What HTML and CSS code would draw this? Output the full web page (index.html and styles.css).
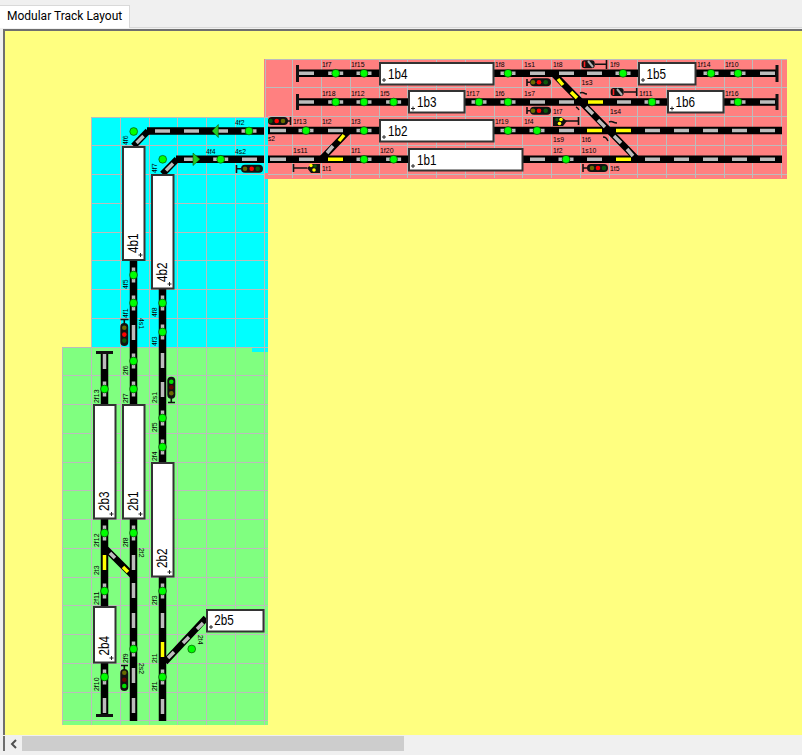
FILE: index.html
```html
<!DOCTYPE html>
<html lang="en">
<head>
<meta charset="utf-8">
<title>Modular Track Layout</title>
<link rel="stylesheet" href="styles.css">
</head>
<body>
<div class="window">
  <div class="tabstrip"><div class="tab">Modular Track Layout</div></div>
  <div class="frame">
    <div class="canvas">
      <svg class="layout" width="797" height="704" viewBox="5 31 797 704" xmlns="http://www.w3.org/2000/svg">
        <defs>
          <g id="dh"><path class="dash" d="M-7.500 0h4M3.500 0h4"/><circle class="lamp-det" r="3.900"/></g>
          <g id="dv"><path class="dash" d="M0 -7.500v4M0 3.500v4"/><circle class="lamp-det" r="3.900"/></g>
          <g id="plus"><path class="plus" d="M-2 0h4M0 -2v4"/></g>
        </defs>

        <!-- panels -->
        <rect class="p-red" x="264" y="59" width="523" height="120"/>
        <rect class="p-cyan" x="91" y="117" width="177" height="235"/>
        <rect class="p-red" x="264" y="173" width="4" height="6"/>
        <rect class="p-green" x="62" y="347" width="190" height="5"/>
        <rect class="p-green" x="62" y="352" width="206" height="373"/>

        <!-- grids -->
        <path class="grid" d="M292.75 59V178M321.5 59V178M350.25 59V178M379 59V178M407.75 59V178M436.5 59V178M465.25 59V178M494 59V178M522.75 59V178M551.5 59V178M580.25 59V178M609 59V178M637.75 59V178M666.5 59V178M695.25 59V178M724 59V178M752.75 59V178M781.5 59V178M265 59V117M265 59H787M265 87.75H787M268 116.5H787M268 145.25H787M268 174H787"/>
        <path class="grid" d="M91.5 117V347M120.25 117V347M149 117V347M177.75 117V347M206.5 117V347M235.25 117V347M264 117V347M91 117H268M91 145.75H268M91 174.5H264M91 203.25H268M91 232H268M91 260.75H268M91 289.5H268M91 318.25H268"/>
        <path class="grid" d="M62.75 347V725M91.5 347V725M120.25 347V725M149 347V725M177.75 347V725M206.5 347V725M235.25 347V725M264 347V725M62 347H268M62 375.75H268M62 404.5H268M62 433.25H268M62 462H268M62 490.75H268M62 519.5H268M62 548.25H268M62 577H268M62 605.75H268M62 634.5H268M62 663.25H268M62 692H268M62 720.75H268"/>

        <!-- track bodies -->
        <path class="rail" d="M297 73.3H379M494 73.3H638M696 73.3H777M297 102H408M465 102H667M724 102H777M268 130.6H379M494 130.6H782M268 159.3H408M523 159.3H782"/>
        <path class="rail-d" d="M553 73.3L637 159.3M322 158.5L348 131.6"/>
        <path class="rail-d" d="M133.5 146L148 131"/>
        <path class="rail-d" d="M162.5 174L177 159.3"/>
        <path class="rail" d="M147 131H264M176 159.3H264"/>
        <path class="rail" d="M133.5 260V404M162.5 289V462M104.5 352V404M133.5 519V721M162.5 577V721M104.5 519V606M104.5 663V715"/>
        <path class="rail-d" d="M106 549L133 576M165 662L206 618"/>

        <!-- buffers -->
        <path class="stop" d="M297.5 65V82M297.5 94V110M777 65V82M777 94V110M96 352.5H113M96 715.5H113"/>

        <!-- dashes -->
        <path class="dash" d="M299 73.3h15M530 73.3h15M559 73.3h15M587 73.3h15M760 73.3h15M299 102h15M530 102h15M559 102h15M617 102h14M760 102h15M270 130.6h16M328 130.6h15M559 130.6h15M645 130.6h15M674 130.6h15M703 130.6h15M732 130.6h15M760 130.6h15M270 159.3h16M299 159.3h15M530 159.3h15M587 159.3h15M645 159.3h15M674 159.3h15M703 159.3h15M732 159.3h15M760 159.3h15"/>
        <path class="dash" d="M155 131h15M184 131h15M218 131h10M184 159.3h9M242 159.3h15M136.500 143l7 -7M166 170.500l7 -7"/>
        <path class="dash" d="M133.500 325v15M162.500 353v15M162.500 382v15M104.500 354v15M133.500 555v15M133.500 583v15M133.500 613v15M133.500 668v15M133.500 698v15M162.500 613v15M162.500 699v15M104.500 698v15"/>
        <path class="dash" d="M586 107l7 7M598 120l7 7M614 136l7 7M627 149l6 7M327 153l6 -7M110 553l5 5M168 658l6 -6M183 643l6 -6M197 629l6 -6"/>
        <path class="dash-y" d="M588 102h15M587 130.6h15M616 130.6h15M328 159.3h15M616 159.3h15M104.500 555v15M162.500 642v15M558 79l5 6M571 92l6 6M123 567l5 5M339 141l5 -6"/>

        <!-- detectors -->
        <use href="#dh" x="335.700" y="73.300"/><use href="#dh" x="364" y="73.300"/><use href="#dh" x="508" y="73.300"/><use href="#dh" x="623" y="73.300"/><use href="#dh" x="711" y="73.300"/><use href="#dh" x="738" y="73.300"/>
        <use href="#dh" x="335.700" y="102"/><use href="#dh" x="364" y="102"/><use href="#dh" x="393.600" y="102"/><use href="#dh" x="479" y="102"/><use href="#dh" x="508" y="102"/><use href="#dh" x="652" y="102"/><use href="#dh" x="738" y="102"/>
        <use href="#dh" x="306" y="130.600"/><use href="#dh" x="364" y="130.600"/><use href="#dh" x="508" y="130.600"/><use href="#dh" x="537" y="130.600"/>
        <use href="#dh" x="364" y="159.300"/><use href="#dh" x="393.600" y="159.300"/><use href="#dh" x="566" y="159.300"/>
        <use href="#dh" x="249" y="131"/><use href="#dh" x="220.700" y="159.300"/>
        <use href="#dv" x="133.500" y="275"/><use href="#dv" x="133.500" y="303"/><use href="#dv" x="133.500" y="361"/><use href="#dv" x="133.500" y="389"/><use href="#dv" x="133.500" y="533"/><use href="#dv" x="133.500" y="649"/>
        <use href="#dv" x="162.500" y="303"/><use href="#dv" x="162.500" y="332"/><use href="#dv" x="162.500" y="418"/><use href="#dv" x="162.500" y="447"/><use href="#dv" x="162.500" y="591"/><use href="#dv" x="162.500" y="677"/>
        <use href="#dv" x="104.500" y="389"/><use href="#dv" x="104.500" y="533"/><use href="#dv" x="104.500" y="591"/><use href="#dv" x="104.500" y="677"/>
        <circle class="lamp-det" cx="133.700" cy="131.500" r="3.900"/>
        <circle class="lamp-det" cx="162.700" cy="159.300" r="3.900"/>
        <circle class="lamp-det" cx="191.700" cy="649" r="3.900"/>

        <!-- direction arrows -->
        <path class="arrow" d="M212 131L218.300 124.500V137.500Z"/>
        <path class="arrow" d="M200 159.300L193 153V165.500Z"/>

        <!-- switch marks -->
        <path class="mark" d="M580 93q2 -1 4 0q1 1 3 1M576 107q2 1 3 3M609 122q2 -1 4 0q2 1 4 1M603 137q2 0 3 1q1 1 2 3"/>

        <!-- signals -->
        <g class="sig">
          <path class="post" d="M527 82.300h5M527 79v7"/><rect class="head" x="530" y="78.300" width="21" height="8" rx="4"/><circle class="l-o" cx="533" cy="82.300" r="2.300"/><circle class="l-r" cx="539" cy="82.300" r="2.300"/><circle class="l-g" cx="545.700" cy="82.300" r="2.300"/>
          <path class="post" d="M527 110.700h5M527 107v7"/><rect class="head" x="530" y="106.700" width="21" height="8" rx="4"/><circle class="l-o" cx="533" cy="110.700" r="2.300"/><circle class="l-r" cx="539" cy="110.700" r="2.300"/><circle class="l-g" cx="545.700" cy="110.700" r="2.300"/>
          <path class="post" d="M583 168h5M583 164v8"/><rect class="head" x="587" y="164" width="21" height="8" rx="4"/><circle class="l-o" cx="592" cy="168" r="2.300"/><circle class="l-r" cx="598" cy="168" r="2.300"/><circle class="l-g" cx="604" cy="168" r="2.300"/>
          <path class="post" d="M236.500 168.700h5M236.500 165v8"/><rect class="head" x="241" y="164.700" width="22" height="8" rx="4"/><circle class="l-o" cx="245" cy="168.700" r="2.300"/><circle class="l-r" cx="251.700" cy="168.700" r="2.300"/><circle class="l-g" cx="257.700" cy="168.700" r="2.300"/>
          <path class="post" d="M285 121h5M290.500 117v8"/><rect class="head" x="268" y="117" width="20" height="8" rx="4"/><circle class="l-g" cx="270.500" cy="121" r="2.300"/><circle class="l-r" cx="276.700" cy="121" r="2.300"/><circle class="l-o" cx="283" cy="121" r="2.300"/>

          <path class="post" d="M595 64.300h11M606.500 60v9"/><rect class="head" x="581.700" y="60.300" width="13" height="8" rx="3"/><path class="l-bar" d="M584.500 61.500v5.500"/><path class="l-diag" d="M588 61l5 6"/>
          <path class="post" d="M624 92h12M636.700 88v8"/><rect class="head" x="610.700" y="88" width="13" height="8" rx="3"/><path class="l-bar" d="M613.500 89v6"/><path class="l-diag" d="M617 89l5 6"/>

          <path class="post" d="M566 121h12M578.500 117v8"/><path class="head" d="M553 117h8l6 4l-4 5h-10z"/><circle class="l-g" cx="557" cy="119.500" r="1.800"/><circle class="l-y" cx="561" cy="119.500" r="1.800"/><circle class="l-y" cx="559.500" cy="123.500" r="1.800"/>
          <path class="post" d="M294 168h13M293.500 164v8"/><path class="head" d="M320 164h-8l-5 4l4 5h9z"/><circle class="l-y" cx="311" cy="165.500" r="1.700"/><circle class="l-g" cx="315" cy="166" r="1.800"/><circle class="l-y" cx="314" cy="170" r="1.800"/>

          <path class="post" d="M124.300 319.500v5M120.500 319.500h8"/><rect class="head" x="120.300" y="323" width="8" height="23" rx="4"/><circle class="l-o" cx="124.300" cy="327.700" r="2.300"/><circle class="l-r" cx="124.300" cy="334.600" r="2.300"/><circle class="l-g" cx="124.300" cy="340.600" r="2.300"/>
          <path class="post" d="M171.300 398v5M168 402.500h7"/><rect class="head" x="167.300" y="376.700" width="8" height="22" rx="4"/><circle class="l-G" cx="171.300" cy="381.700" r="2.300"/><circle class="l-R" cx="171.300" cy="387.300" r="2.300"/><circle class="l-o" cx="171.300" cy="393.300" r="2.300"/>
          <path class="post" d="M124.300 665v5M121 665.500h7"/><rect class="head" x="120.300" y="669" width="8" height="22" rx="4"/><circle class="l-o" cx="124.300" cy="672.700" r="2.300"/><circle class="l-R" cx="124.300" cy="679.700" r="2.300"/><circle class="l-G" cx="124.300" cy="686" r="2.300"/>
        </g>

        <!-- blocks -->
        <rect class="block" x="380" y="63" width="113.500" height="21.500"/>
        <rect class="block" x="409" y="91" width="55.500" height="21.500"/>
        <rect class="block" x="380" y="120" width="113.500" height="21.500"/>
        <rect class="block" x="409" y="149" width="113.500" height="21.500"/>
        <rect class="block" x="639" y="63" width="56.500" height="21.500"/>
        <rect class="block" x="668" y="91" width="55.500" height="21.500"/>
        <rect class="block" x="123" y="147" width="21.500" height="113"/>
        <rect class="block" x="152" y="175" width="21.500" height="113.500"/>
        <rect class="block" x="94" y="405" width="21.500" height="113.500"/>
        <rect class="block" x="123" y="405" width="21.500" height="113.500"/>
        <rect class="block" x="152" y="463" width="21.500" height="113.500"/>
        <rect class="block" x="94" y="607" width="21.500" height="55.500"/>
        <rect class="block" x="207" y="610" width="56.500" height="21.500"/>

        <use href="#plus" x="384" y="80"/><use href="#plus" x="413" y="108.500"/><use href="#plus" x="384" y="137"/><use href="#plus" x="413" y="166"/><use href="#plus" x="643" y="80"/><use href="#plus" x="672" y="108.500"/>
        <use href="#plus" x="140.500" y="255"/><use href="#plus" x="169.500" y="284"/><use href="#plus" x="111.500" y="514"/><use href="#plus" x="140.500" y="514"/><use href="#plus" x="169.500" y="572"/><use href="#plus" x="111.500" y="658"/><use href="#plus" x="211" y="627"/>

        <!-- block labels -->
        <text class="blk" textLength="19.500" lengthAdjust="spacingAndGlyphs" x="388" y="79">1b4</text>
        <text class="blk" textLength="19.500" lengthAdjust="spacingAndGlyphs" x="417" y="107">1b3</text>
        <text class="blk" textLength="19.500" lengthAdjust="spacingAndGlyphs" x="388" y="136">1b2</text>
        <text class="blk" textLength="19.500" lengthAdjust="spacingAndGlyphs" x="417" y="164.500">1b1</text>
        <text class="blk" textLength="19.500" lengthAdjust="spacingAndGlyphs" x="646.500" y="79">1b5</text>
        <text class="blk" textLength="19.500" lengthAdjust="spacingAndGlyphs" x="675.500" y="107">1b6</text>
        <text class="blk" textLength="19.500" lengthAdjust="spacingAndGlyphs" x="214.300" y="625">2b5</text>
        <text class="blk" textLength="19.500" lengthAdjust="spacingAndGlyphs" transform="translate(137.700,253) rotate(-90)">4b1</text>
        <text class="blk" textLength="19.500" lengthAdjust="spacingAndGlyphs" transform="translate(166.700,282) rotate(-90)">4b2</text>
        <text class="blk" textLength="19.500" lengthAdjust="spacingAndGlyphs" transform="translate(109,511) rotate(-90)">2b3</text>
        <text class="blk" textLength="19.500" lengthAdjust="spacingAndGlyphs" transform="translate(137.700,511) rotate(-90)">2b1</text>
        <text class="blk" textLength="19.500" lengthAdjust="spacingAndGlyphs" transform="translate(167,568) rotate(-90)">2b2</text>
        <text class="blk" textLength="19.500" lengthAdjust="spacingAndGlyphs" transform="translate(109,655.500) rotate(-90)">2b4</text>

        <!-- small labels -->
        <g class="lbl" lengthAdjust="spacingAndGlyphs">
          <text lengthAdjust="spacingAndGlyphs" textLength="9.500" x="322" y="67">1f7</text><text lengthAdjust="spacingAndGlyphs" textLength="13.500" x="351" y="67">1f15</text><text lengthAdjust="spacingAndGlyphs" textLength="9.500" x="495" y="67">1f8</text><text lengthAdjust="spacingAndGlyphs" textLength="11" x="524" y="67">1s1</text><text lengthAdjust="spacingAndGlyphs" textLength="9.500" x="553" y="67">1t8</text><text lengthAdjust="spacingAndGlyphs" textLength="9.500" x="610" y="67">1f9</text><text lengthAdjust="spacingAndGlyphs" textLength="13.500" x="697" y="67">1f14</text><text lengthAdjust="spacingAndGlyphs" textLength="13.500" x="725" y="67">1f10</text>
          <text lengthAdjust="spacingAndGlyphs" textLength="13.500" x="322" y="95.500">1f18</text><text lengthAdjust="spacingAndGlyphs" textLength="13.500" x="351" y="95.500">1f12</text><text lengthAdjust="spacingAndGlyphs" textLength="9.500" x="380" y="95.500">1f5</text><text lengthAdjust="spacingAndGlyphs" textLength="13.500" x="466" y="95.500">1f17</text><text lengthAdjust="spacingAndGlyphs" textLength="9.500" x="495" y="95.500">1f6</text><text lengthAdjust="spacingAndGlyphs" textLength="11" x="524" y="95.500">1s7</text><text lengthAdjust="spacingAndGlyphs" textLength="13.500" x="639" y="95.500">1f11</text><text lengthAdjust="spacingAndGlyphs" textLength="13.500" x="725" y="95.500">1f16</text>
          <text lengthAdjust="spacingAndGlyphs" textLength="13.500" x="293" y="124">1f13</text><text lengthAdjust="spacingAndGlyphs" textLength="9.500" x="322" y="124">1t2</text><text lengthAdjust="spacingAndGlyphs" textLength="9.500" x="351" y="124">1f3</text><text lengthAdjust="spacingAndGlyphs" textLength="13.500" x="495" y="124">1f19</text><text lengthAdjust="spacingAndGlyphs" textLength="9.500" x="524" y="124">1f4</text>
          <text lengthAdjust="spacingAndGlyphs" textLength="14.700" x="293" y="153">1s11</text><text lengthAdjust="spacingAndGlyphs" textLength="9.500" x="351" y="153">1f1</text><text lengthAdjust="spacingAndGlyphs" textLength="13.500" x="380" y="153">1f20</text><text lengthAdjust="spacingAndGlyphs" textLength="9.500" x="553" y="153">1f2</text><text lengthAdjust="spacingAndGlyphs" textLength="14.700" x="581.500" y="153">1s10</text>
          <text lengthAdjust="spacingAndGlyphs" textLength="11" x="581.500" y="85">1s3</text><text lengthAdjust="spacingAndGlyphs" textLength="9.500" x="553" y="113.500">1t7</text><text lengthAdjust="spacingAndGlyphs" textLength="11" x="610" y="113.500">1s4</text><text lengthAdjust="spacingAndGlyphs" textLength="11" x="553" y="142">1s9</text><text lengthAdjust="spacingAndGlyphs" textLength="9.500" x="581.500" y="142">1t6</text><text lengthAdjust="spacingAndGlyphs" textLength="7" x="268" y="141">s2</text><text lengthAdjust="spacingAndGlyphs" textLength="9.500" x="322" y="171">1t1</text><text lengthAdjust="spacingAndGlyphs" textLength="9.500" x="610" y="171">1t5</text>
          <text lengthAdjust="spacingAndGlyphs" textLength="9.500" x="235" y="125">4f2</text><text lengthAdjust="spacingAndGlyphs" textLength="9.500" x="206" y="153.500">4f4</text><text lengthAdjust="spacingAndGlyphs" textLength="11" x="235" y="153.500">4s2</text>
          <text lengthAdjust="spacingAndGlyphs" textLength="9.500" transform="translate(128,145) rotate(-90)">4f6</text>
          <text lengthAdjust="spacingAndGlyphs" textLength="9.500" transform="translate(157,173) rotate(-90)">4f7</text>
          <text lengthAdjust="spacingAndGlyphs" textLength="9.500" transform="translate(128,289) rotate(-90)">4f5</text>
          <text lengthAdjust="spacingAndGlyphs" textLength="9.500" transform="translate(128,318) rotate(-90)">4f1</text>
          <text lengthAdjust="spacingAndGlyphs" textLength="9.500" transform="translate(157,317) rotate(-90)">4f8</text>
          <text lengthAdjust="spacingAndGlyphs" textLength="9.500" transform="translate(157,346) rotate(-90)">4f3</text>
          <text lengthAdjust="spacingAndGlyphs" textLength="11" transform="translate(139,318) rotate(90)">4s1</text>
          <text lengthAdjust="spacingAndGlyphs" textLength="9.500" transform="translate(128,375) rotate(-90)">2f6</text>
          <text lengthAdjust="spacingAndGlyphs" textLength="9.500" transform="translate(128,403) rotate(-90)">2f7</text>
          <text lengthAdjust="spacingAndGlyphs" textLength="13.500" transform="translate(99,403) rotate(-90)">2f13</text>
          <text lengthAdjust="spacingAndGlyphs" textLength="11" transform="translate(157,403) rotate(-90)">2s1</text>
          <text lengthAdjust="spacingAndGlyphs" textLength="9.500" transform="translate(157,432) rotate(-90)">2f5</text>
          <text lengthAdjust="spacingAndGlyphs" textLength="9.500" transform="translate(157,461) rotate(-90)">2f4</text>
          <text lengthAdjust="spacingAndGlyphs" textLength="13.500" transform="translate(99,547) rotate(-90)">2f12</text>
          <text lengthAdjust="spacingAndGlyphs" textLength="9.500" transform="translate(128,547) rotate(-90)">2f8</text>
          <text lengthAdjust="spacingAndGlyphs" textLength="9.500" transform="translate(99,575) rotate(-90)">2t3</text>
          <text lengthAdjust="spacingAndGlyphs" textLength="13.500" transform="translate(99,605) rotate(-90)">2f11</text>
          <text lengthAdjust="spacingAndGlyphs" textLength="9.500" transform="translate(157,605) rotate(-90)">2f3</text>
          <text lengthAdjust="spacingAndGlyphs" textLength="9.500" transform="translate(128,663) rotate(-90)">2f9</text>
          <text lengthAdjust="spacingAndGlyphs" textLength="9.500" transform="translate(157,663) rotate(-90)">2t1</text>
          <text lengthAdjust="spacingAndGlyphs" textLength="13.500" transform="translate(99,691) rotate(-90)">2f10</text>
          <text lengthAdjust="spacingAndGlyphs" textLength="9.500" transform="translate(157,691) rotate(-90)">2f1</text>
          <text lengthAdjust="spacingAndGlyphs" textLength="9.500" transform="translate(139,548) rotate(90)">2t2</text>
          <text lengthAdjust="spacingAndGlyphs" textLength="11" transform="translate(139,663) rotate(90)">2s2</text>
          <text lengthAdjust="spacingAndGlyphs" textLength="9.500" transform="translate(198,635) rotate(90)">2t4</text>
        </g>
      </svg>
    </div>
  </div>
  <div class="scrollbar">
    <div class="arrow-btn"><svg width="8" height="10" viewBox="0 0 8 10" xmlns="http://www.w3.org/2000/svg"><path class="chev" d="M6 1L2 5l4 4"/></svg></div>
    <div class="thumb"></div>
  </div>
</div>
</body>
</html>
```
FILE: styles.css
```css
html, body {
  margin: 0;
  padding: 0;
  background: #f0f0f0;
  overflow: hidden;
}
.window {
  width: 802px;
  height: 755px;
  display: flex;
  flex-direction: column;
}
.tabstrip {
  height: 28px;
  box-sizing: border-box;
  padding-top: 5px;
  border-bottom: 1px solid #d9d9d9;
  display: flex;
}
.tab {
  width: 130px;
  box-sizing: border-box;
  height: 23px;
  background: #fff;
  border: 1px solid #d9d9d9;
  border-bottom: none;
  border-left: none;
  padding-left: 7px;
  font: 12px/21px Roboto, sans-serif;
  color: #000;
}
.frame {
  margin: 1px 0 0 3px;
  border-left: 2px solid #6f6f6f;
  border-top: 2px solid #6f6f6f;
  height: 704px;
}
.canvas {
  background: #ffff80;
  height: 704px;
  width: 797px;
  overflow: hidden;
}
.layout { display: block; }

.p-red { fill: #ff8080; }
.p-cyan { fill: #00ffff; }
.p-green { fill: #80ff80; }
.grid { fill: none; stroke: #bcbcbc; stroke-width: 1; shape-rendering: crispEdges; }
.rail { fill: none; stroke: #000; stroke-width: 7.5; }
.rail-d { fill: none; stroke: #000; stroke-width: 6.5; }
.stop { fill: none; stroke: #111; stroke-width: 3; }
.dash { fill: none; stroke: #bcbcbc; stroke-width: 3.5; }
.dash-y { fill: none; stroke: #ffff00; stroke-width: 3.5; }
.lamp-det { fill: #00ff00; stroke: #063806; stroke-width: 0.6; }
.arrow { fill: #22cc22; stroke: #0a5a0a; stroke-width: 0.6; }
.mark { fill: none; stroke: #111; stroke-width: 1.4; }
.post { fill: none; stroke: #111; stroke-width: 1.6; }
.head { fill: #111; }
.l-o { fill: #6a6a00; }
.l-r { fill: #ff0000; }
.l-g { fill: #0a5a0a; }
.l-y { fill: #ffff00; }
.l-G { fill: #00e000; }
.l-R { fill: #660000; }
.l-bar { fill: none; stroke: #ff2020; stroke-width: 1.600; }
.l-diag { fill: none; stroke: #b0b0b0; stroke-width: 2; }
.block { fill: #fff; stroke: #333; stroke-width: 2; }
.plus { fill: none; stroke: #222; stroke-width: 1; }
.blk { font: 15px "Liberation Sans", Arial, sans-serif; fill: #000; }
.lbl text { font: 8px "Liberation Sans", Arial, sans-serif; fill: #000; }

.scrollbar {
  margin: 1px 0 0 3px;
  border-left: 2px solid #6f6f6f;
  height: 15px;
  display: flex;
  align-items: stretch;
}
.arrow-btn {
  width: 17px;
  display: flex;
  align-items: center;
  justify-content: center;
  background: #f0f0f0;
}
.chev { fill: none; stroke: #505050; stroke-width: 2; }
.thumb {
  width: 382px;
  background: #cdcdcd;
}
```
